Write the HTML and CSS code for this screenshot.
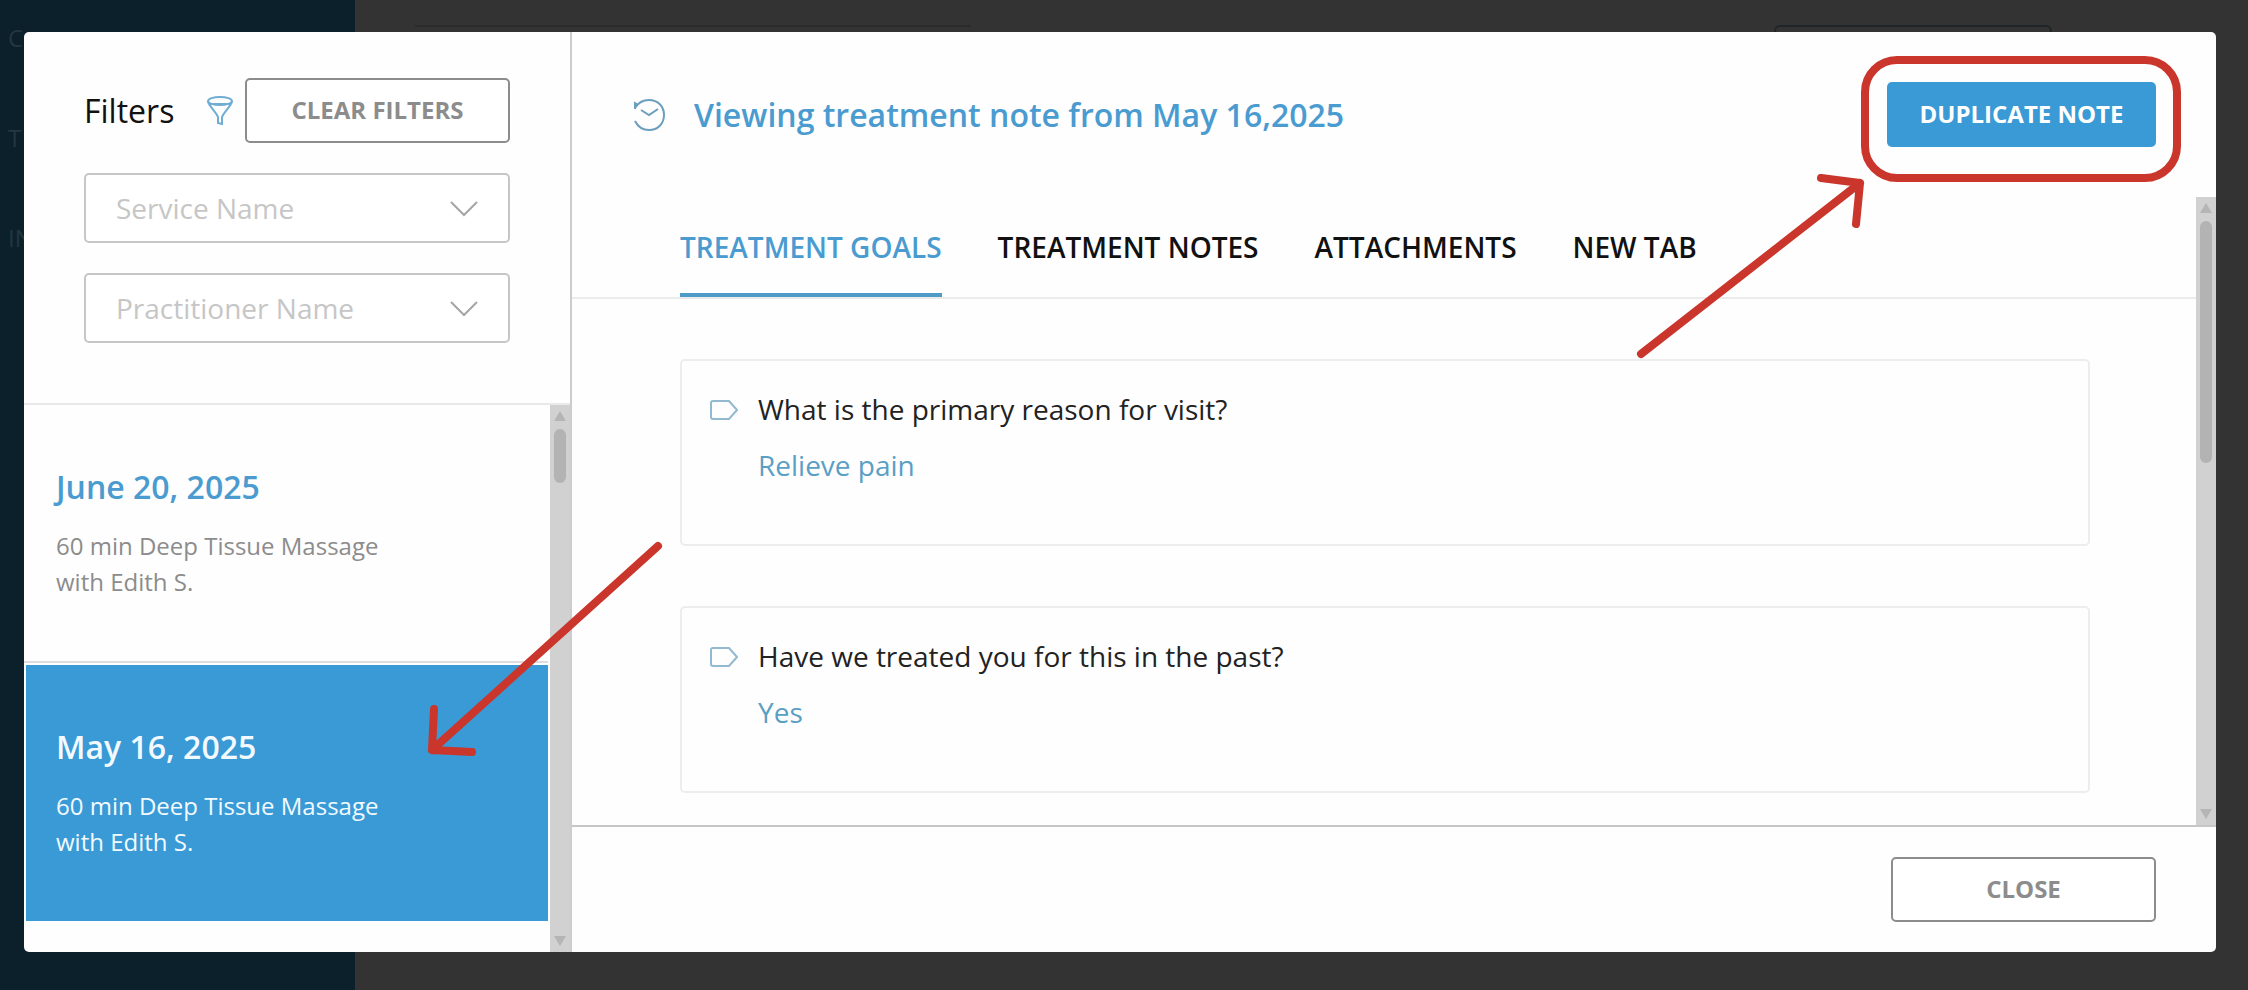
FILE: index.html
```html
<!DOCTYPE html>
<html lang="en">
<head>
    <meta charset="UTF-8">
    <meta name="viewport" content="width=device-width, initial-scale=1.0">
    <title>Treatment Notes</title>
    <link rel="stylesheet" href="styles.css">
</head>
<body>
    <!-- Dimmed page behind the dialog -->
    <div class="page-behind">
        <nav class="side-nav">
            <span>C</span>
            <span>T</span>
            <span>IN</span>
        </nav>
        <div class="page-content">
            <div class="ghost-panel"></div>
            <div class="ghost-button"></div>
        </div>
    </div>

    <!-- Treatment note dialog -->
    <div class="modal" role="dialog" aria-label="Treatment notes">
        <aside class="sidebar">
            <div class="filters">
                <div class="filters-header">
                    <span class="filters-title">Filters</span>
                    <svg class="funnel-icon" viewBox="0 0 26 30">
                        <ellipse cx="13" cy="5" rx="12" ry="4"/>
                        <path d="M1 5.500C2 10 9 16 11 21V27L15 28V21C17 16 24 10 25 5.500"/>
                        <path d="M3 8H23"/>
                    </svg>
                    <button class="btn btn-outline">CLEAR FILTERS</button>
                </div>
                <div class="select-wrap">
                    <select class="filter-select" aria-label="Service Name">
                        <option>Service Name</option>
                    </select>
                    <svg class="chevron" viewBox="0 0 28 16"><path d="M1 1L14 14L27 1"/></svg>
                </div>
                <div class="select-wrap">
                    <select class="filter-select" aria-label="Practitioner Name">
                        <option>Practitioner Name</option>
                    </select>
                    <svg class="chevron" viewBox="0 0 28 16"><path d="M1 1L14 14L27 1"/></svg>
                </div>
            </div>

            <div class="visits">
                <div class="visit-list">
                    <a href="#" class="visit">
                        <h3>June 20, 2025</h3>
                        <p>60 min Deep Tissue Massage<br>with Edith S.</p>
                    </a>
                    <a href="#" class="visit active">
                        <h3>May 16, 2025</h3>
                        <p>60 min Deep Tissue Massage<br>with Edith S.</p>
                    </a>
                </div>
                <div class="scrollbar">
                    <span class="arrow-up"></span>
                    <span class="thumb"></span>
                    <span class="arrow-down"></span>
                </div>
            </div>
        </aside>

        <main class="note">
            <header class="note-header">
                <svg class="history-icon" viewBox="0 0 32 32">
                    <path d="M1 10V4L4 6M1 9C4 4 9 1 15 1C24 1 30 7.500 30 16C30 24.500 24 31 15 31C9 31 4 28 1 22"/>
                    <path d="M7 11L15 16L24 10"/>
                </svg>
                <h2>Viewing treatment note from May 16,2025</h2>
                <button class="btn btn-primary">DUPLICATE NOTE</button>
            </header>

            <div class="note-body">
                <div class="note-scroll">
                    <nav class="tabs">
                        <a href="#" class="tab active">TREATMENT GOALS</a>
                        <a href="#" class="tab">TREATMENT NOTES</a>
                        <a href="#" class="tab">ATTACHMENTS</a>
                        <a href="#" class="tab">NEW TAB</a>
                    </nav>
                    <div class="questions">
                        <section class="question">
                            <svg class="tag-icon" viewBox="0 0 28 20"><path d="M3 1H19L27 10L19 19H3Q1 19 1 17V3Q1 1 3 1Z"/></svg>
                            <div>
                                <h4>What is the primary reason for visit?</h4>
                                <p>Relieve pain</p>
                            </div>
                        </section>
                        <section class="question">
                            <svg class="tag-icon" viewBox="0 0 28 20"><path d="M3 1H19L27 10L19 19H3Q1 19 1 17V3Q1 1 3 1Z"/></svg>
                            <div>
                                <h4>Have we treated you for this in the past?</h4>
                                <p>Yes</p>
                            </div>
                        </section>
                    </div>
                </div>
                <div class="scrollbar note-scrollbar">
                    <span class="arrow-up"></span>
                    <span class="thumb"></span>
                    <span class="arrow-down"></span>
                </div>
            </div>

            <footer class="note-footer">
                <button class="btn btn-outline">CLOSE</button>
            </footer>
        </main>
    </div>

    <!-- Red callouts drawn on top -->
    <div class="callout-box"></div>
    <svg class="callout-arrow arrow-duplicate" viewBox="0 0 230 190">
        <path d="M6 180L225 9M186 4L225 9L221 50"/>
    </svg>
    <svg class="callout-arrow arrow-visit" viewBox="0 0 240 220">
        <path d="M233 6L7 210M9 169L7 210L47 212"/>
    </svg>
</body>
</html>
```
FILE: styles.css
```css
* {
    box-sizing: border-box;
}

body {
    margin: 0;
    min-height: 100vh;
    padding: 32px 32px 38px 24px;
    display: flex;
    font-family: 'Open Sans', sans-serif;
    background: #333;
    position: relative;
    overflow: hidden;
}

h2, h3, h4, p {
    margin: 0;
}

a {
    text-decoration: none;
    color: inherit;
}

svg {
    fill: none;
    flex-shrink: 0;
}

/* Dimmed page */
.page-behind {
    position: absolute;
    inset: 0;
    display: flex;
}

.side-nav {
    width: 355px;
    background: #0b202b;
    color: #24363f;
    font-size: 24px;
    line-height: 32px;
    padding: 22px 8px;
    display: flex;
    flex-direction: column;
    gap: 68px;
}

.page-content {
    flex: 1;
    display: flex;
    justify-content: space-between;
    align-items: flex-start;
    padding: 25px 196px 0 60px;
}

.ghost-panel {
    width: 556px;
    height: 40px;
    border-top: 2px solid #2b2b2b;
}

.ghost-button {
    width: 278px;
    height: 60px;
    border: 2px solid #1f2526;
    border-radius: 6px;
}

/* Dialog */
.modal {
    position: relative;
    flex: 1;
    display: flex;
    background: #fefefe;
    border-radius: 5px;
    overflow: hidden;
}

.sidebar {
    width: 548px;
    flex-shrink: 0;
    display: flex;
    flex-direction: column;
    border-right: 2px solid #ccc;
}

.filters {
    padding: 46px 60px 60px;
    display: flex;
    flex-direction: column;
    gap: 30px;
}

.filters-header {
    display: flex;
    align-items: center;
}

.filters-title {
    font-size: 32px;
    color: #111;
}

.funnel-icon {
    width: 26px;
    height: 30px;
    margin-left: auto;
    margin-right: 12px;
    stroke: #6fadd3;
    stroke-width: 2;
}

.btn {
    height: 65px;
    padding: 0 0 2px;
    border-radius: 5px;
    font-family: inherit;
    font-size: 24px;
    font-weight: 700;
    cursor: pointer;
}

.btn-outline {
    width: 265px;
    background: #fff;
    border: 2px solid #8c8c8c;
    color: #8c8c8c;
}

.btn-primary {
    width: 269px;
    background: #399ad6;
    border: none;
    color: #fff;
}

.select-wrap {
    position: relative;
}

.filter-select {
    appearance: none;
    display: block;
    width: 100%;
    height: 70px;
    padding: 0 30px;
    border: 2px solid #c6c6c6;
    border-radius: 5px;
    background: #fff;
    color: #c6c6c6;
    font-family: inherit;
    font-size: 28px;
}

.chevron {
    position: absolute;
    right: 32px;
    top: 28px;
    width: 28px;
    height: 16px;
    stroke: #a5a5a5;
    stroke-width: 2;
    pointer-events: none;
}

/* Visit list */
.visits {
    flex: 1;
    display: flex;
    border-top: 2px solid #e9e9e9;
}

.visit-list {
    flex: 1;
    padding-right: 2px;
}

.visit {
    display: block;
    height: 258px;
    padding: 58px 30px 0 32px;
    color: #8c8c8c;
    border-bottom: 2px solid #ddd;
}

.visit h3 {
    font-size: 32px;
    line-height: 48px;
    font-weight: 600;
    color: #4a9bd0;
}

.visit p {
    font-size: 24px;
    line-height: 36px;
    margin-top: 17px;
}

.visit.active {
    height: 256px;
    margin: 2px 0 0 2px;
    padding: 58px 30px 0;
    background: #399ad6;
    border: none;
    color: #f2faff;
}

.visit.active h3 {
    color: #f2faff;
}

/* Scrollbars */
.scrollbar {
    width: 20px;
    background: #d1d1d1;
    display: flex;
    flex-direction: column;
    align-items: center;
    padding: 6px 0;
}

.arrow-up, .arrow-down {
    border: 6px solid transparent;
}

.arrow-up {
    border-top: none;
    border-bottom: 10px solid #b5b5b5;
}

.arrow-down {
    border-bottom: none;
    border-top: 10px solid #b5b5b5;
    margin-top: auto;
}

.thumb {
    width: 12px;
    height: 54px;
    margin-top: 8px;
    border-radius: 6px;
    background: #b3b3b3;
}

.note-scrollbar .thumb {
    height: 242px;
}

/* Note */
.note {
    flex: 1;
    display: flex;
    flex-direction: column;
}

.note-header {
    display: flex;
    align-items: center;
    padding: 50px 60px 50px 62px;
}

.history-icon {
    width: 32px;
    height: 32px;
    stroke: #6b9fbd;
    stroke-width: 2;
}

.note-header h2 {
    margin-left: 28px;
    font-size: 32px;
    font-weight: 600;
    color: #4a9bd0;
}

.note-header .btn {
    margin-left: auto;
}

.note-body {
    flex: 1;
    display: flex;
}

.note-scroll {
    flex: 1;
}

.tabs {
    display: flex;
    gap: 56px;
    height: 102px;
    padding-left: 108px;
    border-bottom: 2px solid #ebebeb;
}

.tab {
    padding-top: 32px;
    font-size: 28px;
    line-height: 36px;
    font-weight: 600;
    color: #111;
}

.tab.active {
    color: #4a9bd0;
    border-bottom: 4px solid #4d9bc6;
}

.questions {
    padding: 60px 106px 32px 108px;
    display: flex;
    flex-direction: column;
    gap: 60px;
}

.question {
    height: 187px;
    display: flex;
    gap: 20px;
    padding: 29px 28px;
    border: 2px solid #ededed;
    border-radius: 5px;
}

.tag-icon {
    width: 28px;
    height: 20px;
    margin-top: 10px;
    stroke: #92b9d0;
    stroke-width: 2;
}

.question h4 {
    font-size: 28px;
    line-height: 38px;
    font-weight: 400;
    color: #222;
}

.question p {
    margin-top: 18px;
    font-size: 28px;
    line-height: 38px;
    color: #5a9fc5;
}

.note-footer {
    display: flex;
    justify-content: flex-end;
    padding: 30px 60px;
    border-top: 2px solid #c6c6c6;
}

/* Callouts */
.callout-box {
    position: absolute;
    top: 56px;
    right: 67px;
    width: 320px;
    height: 126px;
    border: 8px solid #ca362c;
    border-radius: 36px;
}

.callout-arrow {
    position: absolute;
    stroke: #ca362c;
    stroke-width: 8;
    stroke-linecap: round;
    stroke-linejoin: round;
}

.arrow-duplicate {
    top: 174px;
    right: 383px;
    width: 230px;
    height: 190px;
}

.arrow-visit {
    top: 540px;
    left: 425px;
    width: 240px;
    height: 220px;
}
```
